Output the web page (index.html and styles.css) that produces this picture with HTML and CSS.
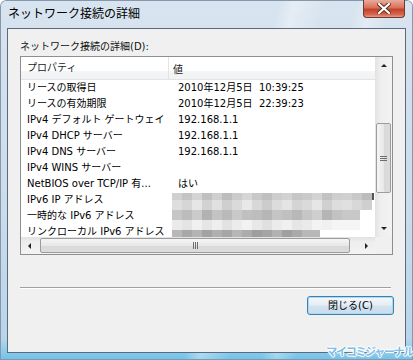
FILE: index.html
```html
<!DOCTYPE html>
<html lang="ja">
<head>
    <meta charset="UTF-8">
    <meta name="viewport" content="width=device-width, initial-scale=1.0">
    <title>ネットワーク接続の詳細</title>
    <link rel="stylesheet" href="styles.css">
</head>
<body>
    <div class="window">
        <div class="titlebar">
            <span class="title">ネットワーク接続の詳細</span>
            <span class="close">
                <svg width="14" height="11" viewBox="0 0 14 11">
                    <path d="M2 1 L12 10 M12 1 L2 10" stroke="#5a2a22" stroke-width="4" stroke-linecap="square"/>
                    <path d="M2 1 L12 10 M12 1 L2 10" stroke="#ffffff" stroke-width="2.2" stroke-linecap="square"/>
                </svg>
            </span>
        </div>

        <div class="client">
            <div class="caption">ネットワーク接続の詳細(D):</div>

            <div class="listbox">
                <div class="listview">
                    <div class="header">
                        <span class="col-prop">プロパティ</span>
                        <span class="col-val">値</span>
                    </div>
                    <div class="row"><span class="prop">リースの取得日</span><span class="val">2010年12月5日&nbsp; 10:39:25</span></div>
                    <div class="row"><span class="prop">リースの有効期限</span><span class="val">2010年12月5日&nbsp; 22:39:23</span></div>
                    <div class="row"><span class="prop">IPv4 デフォルト ゲートウェイ</span><span class="val">192.168.1.1</span></div>
                    <div class="row"><span class="prop">IPv4 DHCP サーバー</span><span class="val">192.168.1.1</span></div>
                    <div class="row"><span class="prop">IPv4 DNS サーバー</span><span class="val">192.168.1.1</span></div>
                    <div class="row"><span class="prop">IPv4 WINS サーバー</span><span class="val"></span></div>
                    <div class="row"><span class="prop">NetBIOS over TCP/IP 有...</span><span class="val">はい</span></div>
                    <div class="row"><span class="prop">IPv6 IP アドレス</span><span class="val"></span></div>
                    <div class="row"><span class="prop">一時的な IPv6 アドレス</span><span class="val"></span></div>
                    <div class="row"><span class="prop">リンクローカル IPv6 アドレス</span><span class="val"></span></div>

                    <div class="mosaic">
                        <div class="mosaic-a"></div>
                        <div class="mosaic-b"></div>
                        <div class="mosaic-c"></div>
                        <div class="mosaic-d"></div>
                        <div class="mosaic-e"></div>
                    </div>
                </div>

                <div class="vscroll">
                    <div class="arrow"><span class="tri-up"></span></div>
                    <div class="vthumb"><span class="vgrip"></span></div>
                    <div class="arrow arrow-end"><span class="tri-down"></span></div>
                </div>

                <div class="hscroll">
                    <div class="arrow"><span class="tri-left"></span></div>
                    <div class="hthumb"><span class="hgrip"></span></div>
                    <div class="arrow arrow-end"><span class="tri-right"></span></div>
                </div>

                <div class="corner"></div>
            </div>

            <div class="separator"></div>

            <div class="actions">
                <button type="button" class="btn">閉じる(C)</button>
            </div>
        </div>

        <div class="watermark">マイコミジャーナル</div>
    </div>
</body>
</html>
```

FILE: styles.css
```css
body {
    margin: 0;
    width: 413px;
    height: 360px;
    overflow: hidden;
    font-family: "DejaVu Sans", "Noto Sans CJK JP", sans-serif;
    font-size: 10px;
    color: #000;
}
.window {
    position: relative;
    box-sizing: border-box;
    width: 413px;
    height: 360px;
    padding: 0 7px 7px 7px;
    display: flex;
    flex-direction: column;
    border-radius: 6px 6px 0 0;
    background:
        linear-gradient(105deg, transparent 0 55%, rgba(255, 255, 255, 0.35) 58%, transparent 64%, transparent 70%, rgba(255, 255, 255, 0.3) 73%, transparent 77%),
        linear-gradient(180deg, #d8e4ef 0%, #cadbea 60%, #b9d5ea 94%, #6cc3ea 100%);
    box-shadow: inset 0 0 0 1px #8597ab;
}
.titlebar {
    height: 28px;
    display: flex;
    align-items: flex-start;
}
.title {
    font-family: "Noto Sans CJK JP", sans-serif;
    font-size: 12px;
    line-height: 26px;
    padding-left: 1px;
}
.close {
    margin-left: auto;
    margin-right: 1px;
    width: 42px;
    height: 18px;
    box-sizing: border-box;
    display: flex;
    align-items: center;
    justify-content: center;
    border: 1px solid #6e3a32;
    border-top: none;
    border-radius: 0 0 4px 4px;
    background: linear-gradient(180deg, #e9ab9c 0%, #d9715a 45%, #c4412a 55%, #d5674f 85%, #e79a87 100%);
}
.client {
    flex: 1;
    background: #f0f0f0;
    border: 1px solid #5b6a7c;
    padding: 10px 11px 0 12px;
}
.caption {
    line-height: 16px;
    margin-bottom: 1px;
    color: #111;
}
.listbox {
    width: 373px;
    height: 199px;
    box-sizing: border-box;
    border: 1px solid #8a8f96;
    background: #fff;
    display: grid;
    grid-template-columns: 354px 17px;
    grid-template-rows: 180px 17px;
}
.listview {
    position: relative;
    overflow: hidden;
}
.header {
    height: 23px;
    box-sizing: border-box;
    display: flex;
    align-items: center;
    border-bottom: 1px solid #e3e3e3;
    background: linear-gradient(180deg, #ffffff 0%, #ffffff 62%, #f4f5f6 66%, #f1f2f3 100%);
    color: #222;
}
.col-prop {
    width: 141px;
    padding-left: 6px;
    height: 23px;
    line-height: 22px;
    border-right: 1px solid #e2e4e7;
}
.col-val {
    padding-left: 4px;
}
.row {
    display: flex;
    height: 16px;
    line-height: 16px;
    white-space: nowrap;
}
.prop {
    width: 146px;
    padding-left: 6px;
    overflow: hidden;
}
.val {
    padding-left: 5px;
}
.mosaic {
    position: absolute;
    left: 151px;
    top: 136px;
    width: 202px;
}
.mosaic div {
    height: 10px;
}
.mosaic-a {
    height: 7px !important;
    background: linear-gradient(90deg, #d0d0d0 0 10px, #c4c4c4 10px 20px, #d4d4d4 20px 30px, #c0c0c0 30px 40px, #cfcfcf 40px 50px, #bdbdbd 50px 60px, #cbcbcb 60px 70px, #d6d6d6 70px 80px, #c8c8c8 80px 90px, #bfbfbf 90px 100px, #cdcdcd 100px 110px, #d2d2d2 110px 120px, #c6c6c6 120px 130px, #cacaca 130px 140px, #d3d3d3 140px 150px, #c2c2c2 150px 160px, #cecece 160px 170px, #d0d0d0 170px 180px, #c9c9c9 180px 190px, #bcbcbc 190px 200px, #555 200px 202px);
}
.mosaic-b {
    background: linear-gradient(90deg, #dedede 0 10px, #d6d6d6 10px 20px, #e6e6e6 20px 30px, #d2d2d2 30px 40px, #e0e0e0 40px 50px, #cfcfcf 50px 60px, #dadada 60px 70px, #e8e8e8 70px 80px, #d8d8d8 80px 90px, #cccccc 90px 100px, #dcdcdc 100px 110px, #e4e4e4 110px 120px, #d4d4d4 120px 130px, #dadada 130px 140px, #e6e6e6 140px 150px, #d0d0d0 150px 160px, #dddddd 160px 170px, #e0e0e0 170px 180px, #d8d8d8 180px 190px, #cfcfcf 190px 200px, #fff 200px);
}
.mosaic-c {
    background: linear-gradient(90deg, #c6c6c6 0 10px, #bcbcbc 10px 20px, #cbcbcb 20px 30px, #b2b2b2 30px 40px, #c3c3c3 40px 50px, #bababa 50px 60px, #c9c9c9 60px 70px, #c0c0c0 70px 80px, #bdbdbd 80px 90px, #b6b6b6 90px 100px, #c4c4c4 100px 110px, #c0c0c0 110px 120px, #b8b8b8 120px 130px, #c6c6c6 130px 140px, #cfcfcf 140px 150px, #b5b5b5 150px 160px, #c2c2c2 160px 170px, #c8c8c8 170px 188px, #fff 188px);
}
.mosaic-d {
    background: linear-gradient(90deg, #eaeaea 0 10px, #e4e4e4 10px 20px, #f0f0f0 20px 30px, #e6e6e6 30px 40px, #eeeeee 40px 50px, #e2e2e2 50px 60px, #ececec 60px 70px, #f2f2f2 70px 80px, #e8e8e8 80px 90px, #e0e0e0 90px 100px, #ebebeb 100px 110px, #f0f0f0 110px 120px, #e6e6e6 120px 130px, #eaeaea 130px 140px, #f3f3f3 140px 150px, #f0f0f0 150px 160px, #f5f5f5 160px 188px, #fff 188px);
}
.mosaic-e {
    background: linear-gradient(90deg, #b8b8b8 0 10px, #a8a8a8 10px 20px, #b4b4b4 20px 30px, #a2a2a2 30px 40px, #b0b0b0 40px 50px, #a6a6a6 50px 60px, #b6b6b6 60px 70px, #acacac 70px 80px, #9e9e9e 80px 90px, #a4a4a4 90px 100px, #b2b2b2 100px 110px, #a0a0a0 110px 120px, #aaaaaa 120px 130px, #b8b8b8 130px 148px, #fff 148px);
}
.vscroll {
    grid-row: 1;
    grid-column: 2;
    display: flex;
    flex-direction: column;
    background: linear-gradient(90deg, #e2e2e2 0%, #eeeeee 30%, #f3f3f3 100%);
}
.hscroll {
    grid-row: 2;
    grid-column: 1;
    display: flex;
    background: linear-gradient(180deg, #e2e2e2 0%, #eeeeee 30%, #f3f3f3 100%);
}
.corner {
    grid-row: 2;
    grid-column: 2;
    background: #f0f0f0;
}
.arrow {
    width: 17px;
    height: 17px;
    flex: none;
    display: flex;
    align-items: center;
    justify-content: center;
}
.arrow-end {
    margin-top: auto;
}
.hscroll .arrow-end {
    margin-top: 0;
    margin-left: auto;
}
.tri-up {
    border-left: 3px solid transparent;
    border-right: 3px solid transparent;
    border-bottom: 3px solid #222;
}
.tri-down {
    border-left: 3px solid transparent;
    border-right: 3px solid transparent;
    border-top: 3px solid #222;
}
.tri-left {
    border-top: 3px solid transparent;
    border-bottom: 3px solid transparent;
    border-right: 3px solid #222;
}
.tri-right {
    border-top: 3px solid transparent;
    border-bottom: 3px solid transparent;
    border-left: 3px solid #222;
}
.vthumb {
    margin-top: 49px;
    margin-left: 1px;
    width: 15px;
    height: 70px;
    box-sizing: border-box;
    border: 1px solid #9c9c9c;
    border-radius: 2px;
    background: linear-gradient(90deg, #f5f5f5 0%, #e8e8e8 50%, #d9d9d9 52%, #dcdcdc 100%);
    display: flex;
    align-items: center;
    justify-content: center;
}
.vgrip {
    width: 7px;
    height: 5px;
    background: repeating-linear-gradient(180deg, #6d6d6d 0 1px, transparent 1px 2px);
}
.hthumb {
    margin-left: 2px;
    margin-top: 1px;
    width: 310px;
    height: 15px;
    box-sizing: border-box;
    border: 1px solid #9c9c9c;
    border-radius: 2px;
    background: linear-gradient(180deg, #f5f5f5 0%, #e8e8e8 50%, #d9d9d9 52%, #dcdcdc 100%);
    display: flex;
    align-items: center;
    justify-content: center;
}
.hgrip {
    width: 5px;
    height: 7px;
    background: repeating-linear-gradient(90deg, #6d6d6d 0 1px, transparent 1px 2px);
}
.separator {
    width: 371px;
    margin-top: 32px;
    height: 1px;
    background: #a0a0a0;
    border-bottom: 1px solid #fff;
}
.actions {
    display: flex;
    justify-content: flex-end;
    margin-top: 7px;
}
.btn {
    width: 87px;
    height: 19px;
    padding: 0;
    font-family: inherit;
    font-size: 10px;
    line-height: 17px;
    color: #000;
    border: 1px solid #3c7fb1;
    border-radius: 3px;
    background: linear-gradient(180deg, #f4f8fb 0%, #e4eef6 48%, #d3e3ef 52%, #c9dcea 100%);
    box-shadow: inset 0 0 0 1px #a9dbf6;
}
.watermark {
    position: absolute;
    right: 0;
    bottom: 1px;
    font-family: "Noto Sans CJK JP", sans-serif;
    font-size: 11px;
    line-height: 15px;
    font-weight: bold;
    letter-spacing: -1.3px;
    color: #7dbde6;
    text-shadow: -1px 0 #fff, 1px 0 #fff, 0 -1px #fff, 0 1px #fff, 0 0 3px #fff;
}
```
